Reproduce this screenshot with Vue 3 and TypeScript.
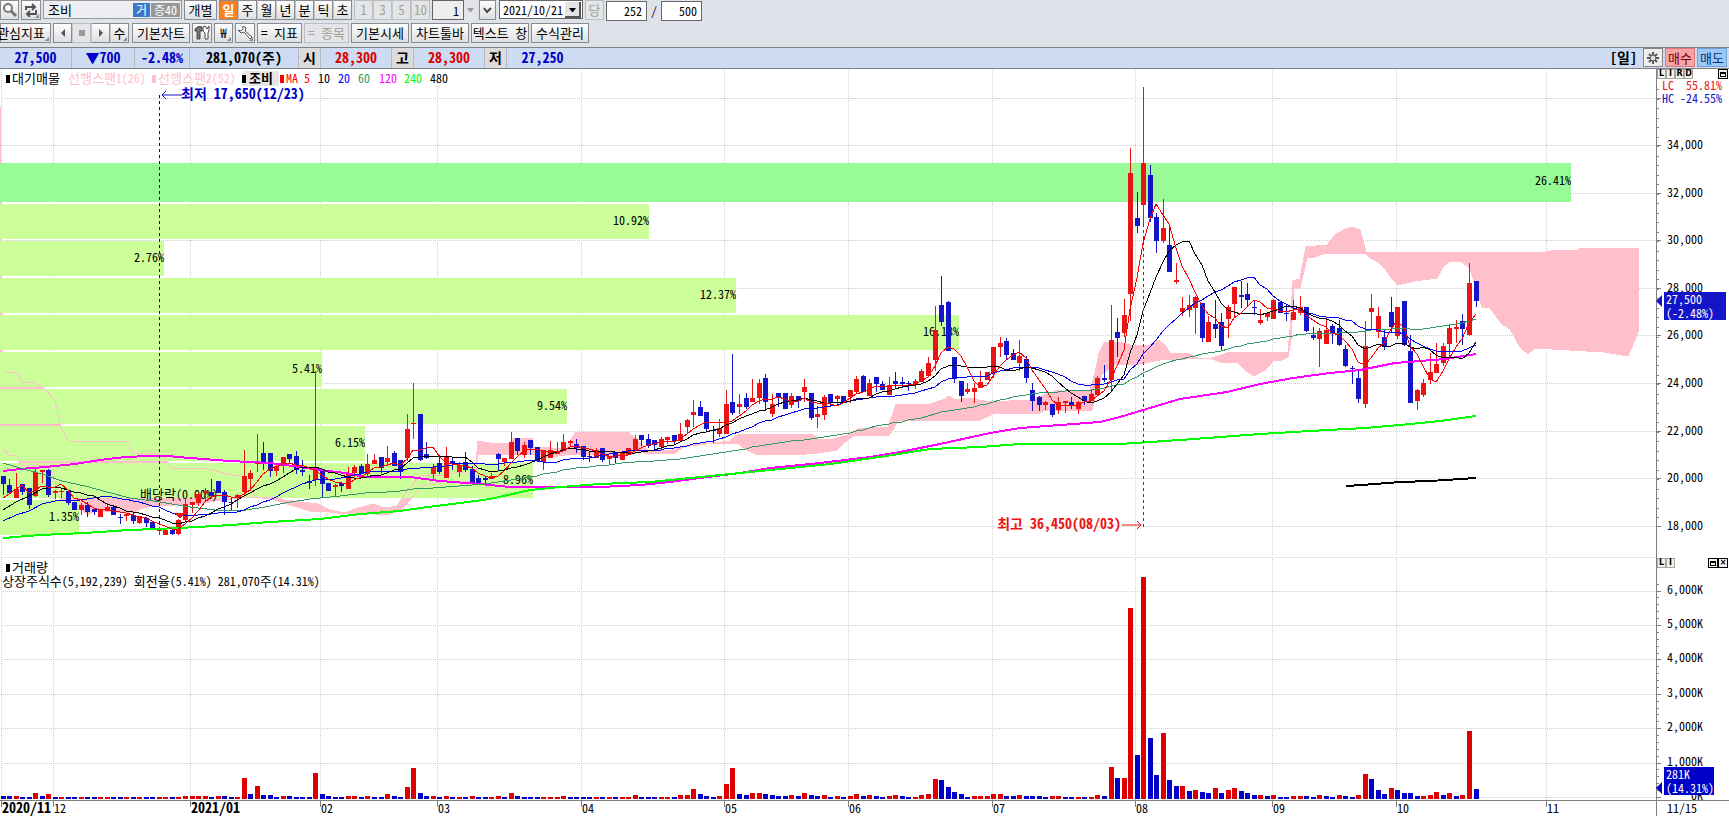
<script setup lang="ts">
import { ref } from 'vue'

type Candle = { x: number; up: boolean; high: number; top: number; bottom: number; low: number; close: number }

// Each entry: direction, high, body top, body bottom, low (chart y units)
const rawCandles = `
b476 476 484 495,b479 485 493 493,r473 489 498 498,b484 484 492 495,b488 488 505 509,r469 472 496 497,r470 470 472 483,b469 470 495 497,r490 491 493 499,r489 491 492 498,
b491 491 503 505,b502 502 510 510,r503 505 510 515,b502 505 512 517,b508 509 512 515,r510 510 517 517,r503 507 511 511,b505 507 515 515,b514 517 518 524,r513 514 516 521,
b513 515 521 524,r516 516 523 524,b517 518 523 527,b522 522 529 529,r527 530 531 535,r530 530 535 535,b530 530 534 535,r519 520 534 535,r498 504 520 522,r502 502 505 513,
r492 494 503 506,r488 491 493 501,b479 492 496 496,b481 481 493 493,b490 492 502 515,b497 502 503 510,r494 495 498 508,r450 476 492 495,r470 473 479 491,r434 463 464 472,
b442 453 464 470,b453 453 471 477,r465 466 471 476,r457 457 466 473,b454 454 459 463,b451 456 470 474,b460 470 472 476,b475 481 483 489,r371 467 480 486,b469 469 484 497,
b483 483 491 491,r484 485 487 496,b482 483 486 492,r467 473 489 489,r465 467 473 477,b464 466 474 474,r454 464 474 476,r454 460 464 464,b457 457 468 473,r446 458 462 466,
b451 453 466 466,b460 460 472 479,r414 429 458 461,r383 423 424 439,b414 414 460 461,b442 454 458 459,r464 467 474 479,b455 463 472 474,r447 457 478 478,b458 461 464 470,
r462 465 472 477,b452 462 470 472,b466 469 483 483,b475 478 483 483,b476 478 480 483,r473 476 479 479,b453 454 459 470,r458 458 462 466,r432 442 459 459,b438 438 451 455,
r442 445 455 458,b440 440 448 455,b447 447 461 461,r450 450 462 470,r441 450 458 458,r442 451 454 454,r434 442 451 451,r440 441 443 447,b439 444 448 453,b446 446 457 460,
b451 456 457 462,r448 450 458 458,b448 448 460 462,r456 456 459 464,b452 452 458 463,r453 453 460 460,r448 448 455 455,r435 439 450 450,b435 435 440 446,b434 439 446 448,
b440 440 445 449,r437 439 447 449,r437 437 440 444,b435 435 441 445,r423 434 441 441,r419 420 427 434,r400 412 415 427,b401 407 416 416,b412 412 429 432,b426 430 431 443,
r419 428 434 437,r390 404 434 434,b354 402 413 415,r394 404 407 414,b393 398 407 409,r379 398 402 402,r379 383 398 404,b374 378 402 411,r394 404 414 417,b393 393 397 407,
b393 393 409 409,r393 396 405 408,b396 396 401 408,r379 387 392 402,b393 393 418 420,r406 414 417 428,r395 397 415 420,b394 394 403 407,r395 396 399 406,b396 396 403 403,
r390 390 397 403,r376 379 392 394,b375 376 392 392,r379 383 396 396,b377 377 384 392,b381 384 390 390,r377 385 395 395,b372 381 384 389,b377 382 384 388,b381 383 384 391,
r379 381 384 389,r369 371 382 382,r357 363 376 376,r306 330 360 371,b276 305 322 326,b301 302 351 351,b357 357 379 383,b381 381 396 402,r383 389 392 394,r383 388 392 403,
r371 382 388 388,r372 372 380 380,r347 347 373 378,r337 343 347 357,b338 341 355 360,b349 353 360 360,r340 356 363 371,b356 359 378 383,b383 390 401 411,b396 397 405 411,
r401 402 405 410,b404 404 415 417,r397 402 410 414,r401 401 403 413,b397 402 405 409,r401 402 409 414,b396 396 401 405,r390 394 401 401,r376 378 395 395,b365 378 380 382,
r305 340 380 392,b318 332 338 357,r299 315 333 337,r148 173 294 321,b192 218 226 233,r87 163 205 224,b165 175 218 222,b213 217 241 253,r199 228 241 243,b228 245 272 272,
r263 280 282 284,r297 308 312 316,r295 305 310 317,r296 297 308 334,b303 303 338 342,r316 322 342 342,b300 324 329 338,b313 322 346 350,r305 307 319 338,r287 287 304 318,
b281 295 297 308,b283 294 300 306,b300 307 308 315,r309 320 323 325,r312 313 317 321,r299 300 319 319,b302 302 313 313,b305 313 314 321,r300 312 320 320,r296 307 313 315,
b307 307 331 332,b327 335 338 340,r328 331 339 367,r318 330 344 344,b324 326 333 344,b320 328 345 346,b345 349 366 367,b366 368 369 384,b371 378 399 403,r321 346 404 408,
r294 308 312 329,r307 316 332 338,b330 337 347 350,b297 312 327 332,r307 307 336 339,b301 301 345 346,b335 351 403 403,r389 390 401 410,r379 383 395 397,r353 372 380 384,
r343 364 373 373,r343 346 363 366,r324 328 344 357,r320 327 329 343,b314 321 329 345,r263 283 335 336,b281 281 301 307`

const xAt = (i: number): number => Math.floor(3 + i * (1473 / 226))

const candles: Candle[] = rawCandles.split(',').map((s, i) => {
  const t = s.trim()
  const up = t[0] === 'r'
  const [high, top, bottom, low] = t.slice(1).split(' ').map(Number)
  return { x: xAt(i), up, high, top, bottom, low, close: up ? top : bottom }
})

const volumes: number[] = (
  '3 3 3 2 2 6 3 5 2 2 2 2 2 2 2 2 2 2 2 2 2 2 2 2 2 2 2 2 3 3 3 3 2 3 3 2 2 21 5 13 4 4 2 3 3 2 2 2 26 5 3 2 2 3 3 2 3 2 2 5 3 2 12 31 6 ' +
  '3 3 2 3 2 2 2 3 2 2 2 3 2 6 3 2 2 2 2 2 2 3 2 2 2 2 2 2 2 2 2 2 4 2 2 2 2 2 2 4 4 10 5 3 2 3 15 31 5 4 6 6 5 4 3 3 4 3 6 4 3 4 2 3 2 ' +
  '3 5 3 4 3 2 3 4 3 2 2 4 5 20 19 12 7 5 2 3 3 3 5 5 3 3 4 3 3 3 2 3 3 2 2 2 2 2 4 3 32 21 21 191 44 222 61 24 66 19 13 13 8 9 7 6 11 6 9 11 8 6 4 4 3 ' +
  '4 2 2 3 3 3 2 4 3 2 4 3 2 4 25 20 9 5 11 9 6 6 3 3 4 7 4 6 3 4 68 10'
).split(' ').map(Number)

const volumeBars = volumes.map((h, i) => {
  const prev = i ? volumes[i - 1] : h
  const up = h === prev ? candles[i]?.up ?? false : h > prev
  return { x: xAt(i) - 2, y: 799 - h, h, up }
})

// Simple moving average of closes, preceded by the part that depends on earlier sessions
function average(n: number, lead: string): string {
  const pts: string[] = [lead]
  for (let i = n - 1; i < candles.length; i++) {
    let sum = 0
    for (let k = i - n + 1; k <= i; k++) sum += candles[k].close
    pts.push(`${xAt(i)},${Math.round(sum / n)}`)
  }
  return pts.join(' ')
}

const thinLines = [
  { color: '#339966', points: average(60, '3,463 20,468 42,474 62,481 85,486 107,492 130,498 160,502 190,507 215,510 240,511 265,507 285,503 310,499 340,496 365,493') },
  { color: '#0000ee', points: average(20, '3,521 16,515 29,511 42,504 55,501 80,500 107,496 122,499') },
  { color: '#000000', points: average(10, '3,510 16,502 29,496 42,489 55,487') },
  { color: '#ff0000', points: average(5, '3,498 9,494 16,489 22,485') },
]
const thickLines = [
  { color: '#ff00ff', points: '3,471 20,469 45,467 75,464 100,460 125,457 150,456 167,456 190,458 230,461 270,463 300,467 320,470 345,473 365,477 410,477 440,481 480,484 510,487 545,487 600,487 640,485 670,482 700,478 740,473 770,468 820,463 870,457 900,452 940,444 990,433 1020,428 1060,425 1100,422 1120,417 1180,399 1227,392 1260,384 1293,378 1330,373 1360,370 1395,363 1420,361 1445,359 1476,354' },
  { color: '#00ff00', points: '3,538 40,535 85,533 130,530 180,528 230,525 270,522 320,519 360,514 400,511 420,508 460,503 490,499 530,490 560,487 600,484 650,482 700,477 740,473 770,470 830,464 880,457 930,449 980,447 1020,444 1060,444 1120,444 1180,440 1260,434 1310,431 1365,428 1400,425 1440,421 1476,416' },
  { color: '#000000', points: '1346,486 1362,485 1400,482 1430,481 1476,478' },
]

const spanUpper =
  '3,372 17,372 22,382 31,382 43,387 55,400 61,427 68,441 127,441 133,453 160,453 172,468 207,469 233,475 241,475 248,488 257,497 275,497 285,500 300,502 318,504 330,510 345,513 355,509 373,504 385,508 397,506 403,497 410,487 420,476 445,475 460,472 470,474 476,462 478,441 490,443 512,443 513,439 532,438 534,447 566,449 570,441 576,432 628,432 640,443 648,450 672,450 682,447 730,441 738,434 812,434 818,439 833,439 848,435 858,429 888,427 893,413 896,404 930,404 945,399 949,396 955,400 970,398 988,402 1030,400 1050,393 1058,390 1068,392 1090,390 1095,373 1099,353 1104,343 1120,342 1130,345 1150,345 1158,340 1165,345 1170,353 1190,354 1198,358 1212,358 1230,352 1288,352 1290,330 1293,281 1300,279 1306,247 1327,245 1335,235 1345,229 1353,227 1360,230 1366,252 1546,252 1554,250 1578,250 1580,248 1639,248'
const spanLower =
  '1639,330 1628,356 1604,352 1535,348 1528,354 1520,347 1510,329 1502,324 1490,308 1482,307 1478,295 1470,268 1460,261 1450,261 1443,267 1437,278 1415,281 1398,285 1392,279 1386,270 1378,262 1370,258 1365,253 1325,253 1315,257 1307,258 1300,288 1294,288 1291,340 1288,357 1280,361 1274,360 1265,370 1254,376 1245,370 1238,363 1220,362 1210,358 1160,360 1140,364 1116,364 1102,374 1095,398 1092,410 1045,410 1040,413 995,413 980,420 898,420 893,430 889,435 855,435 845,442 837,450 818,453 795,455 778,454 757,455 745,449 738,443 700,443 685,446 675,453 648,454 640,452 620,457 610,457 590,454 565,455 545,458 532,454 478,454 476,470 470,481 440,482 430,484 420,487 412,498 400,511 385,515 365,513 345,514 330,512 310,511 290,505 275,500 257,497 240,498 215,501 200,504 150,506 130,513 95,511 88,515 80,508 60,499 50,465 21,465 17,456 9,455 3,448'
const cloud = `0,107 1,107 ${spanUpper} ${spanLower} 0,448`

const profile = [
  { y: 163, h: 39, w: 1571, label: '26.41%', strong: true },
  { y: 204, h: 35, w: 649, label: '10.92%' },
  { y: 241, h: 35, w: 164, label: '2.76%' },
  { y: 278, h: 35, w: 736, label: '12.37%' },
  { y: 315, h: 35, w: 959, label: '16.18%' },
  { y: 352, h: 35, w: 322, label: '5.41%' },
  { y: 389, h: 35, w: 567, label: '9.54%' },
  { y: 426, h: 35, w: 365, label: '6.15%' },
  { y: 463, h: 35, w: 533, label: '8.96%' },
  { y: 500, h: 35, w: 79, label: '1.35%' },
]

const months = [
  { x: 1, label: '2020/11', bold: true },
  { x: 53, label: '12' },
  { x: 190, label: '2021/01', bold: true },
  { x: 320, label: '02' },
  { x: 437, label: '03' },
  { x: 581, label: '04' },
  { x: 724, label: '05' },
  { x: 848, label: '06' },
  { x: 992, label: '07' },
  { x: 1135, label: '08' },
  { x: 1272, label: '09' },
  { x: 1396, label: '10' },
  { x: 1546, label: '11' },
]
const priceY = (k: number): number => Math.floor(98 + (36 - k) * 23.79)
const prices = [36, 34, 32, 30, 28, 26, 24, 22, 20, 18].map(k => ({ y: priceY(k), label: k === 36 ? '' : `${k},000` }))
const priceTicks = Array.from({ length: 46 }, (_, i) => Math.round(89 + i * 9.52))
const volumeLevels = [6, 5, 4, 3, 2, 1, 0].map(k => ({ y: Math.round(797 - k * 34.4), label: k ? `${k},000K` : '0K' }))
const volumeTicks = Array.from({ length: 32 }, (_, i) => Math.round(797 - i * 6.88))

const periods = ['일', '주', '월', '년', '분', '틱', '초']
const active = ref('일')
const date = ref('2021/10/21')
const stock = ref('조비')
const minute = ref('1')
const shown = ref('252')
const total = ref('500')
</script>

<template>
  <main class="window">
    <div class="toolbar">
      <div class="row">
        <button class="btn sq first" aria-label="검색">
          <svg width="16" height="16" viewBox="0 0 16 16"><circle cx="6" cy="6" r="4" fill="#fff" stroke="#777" stroke-width="2" /><path d="M9 9l5 5" stroke="#777" stroke-width="3" /></svg>
        </button>
        <button class="btn sq corner" aria-label="종목 전환">
          <svg width="14" height="14" viewBox="0 0 14 14" fill="none" stroke="#555" stroke-width="2"><path d="M2 7V4h9M8 1l3 3-3 3M12 7v4H3M6 8l-3 3 3 3" /></svg>
        </button>
        <div class="stock">
          <input v-model="stock" aria-label="종목명" />
          <span class="tag blue">거</span><span class="tag">증40</span>
        </div>
        <button class="btn each">개별</button>
        <div class="group">
          <button v-for="p in periods" :key="p" class="btn cell" :class="{ on: active === p }" @click="active = p">{{ p }}</button>
        </div>
        <div class="group">
          <button v-for="n in ['1', '3', '5', '10']" :key="n" class="btn cell off" disabled>{{ n }}</button>
        </div>
        <div class="minute">
          <input v-model="minute" class="field" aria-label="분 단위" /><button class="btn drop off" aria-label="분 선택"><svg width="7" height="4"><path d="M0 0h7L4 4H3z" fill="#999" /></svg></button>
        </div>
        <button class="btn chev" aria-label="더보기"><svg width="9" height="8" fill="none" stroke="#444" stroke-width="2"><path d="M1 2l3 4 4-4" /></svg></button>
        <div class="date">
          <select v-model="date" aria-label="조회일"><option>2021/10/21</option></select>
          <svg class="datearrow" width="16" height="16"><path d="M0 0h16v16H0z" fill="#e4e4e4" /><path d="M15 0v15H0" fill="none" stroke="#555" stroke-width="2" /><path d="M4 6h7L8 10H7z" fill="#000" /></svg>
        </div>
        <button class="btn cell off" disabled>당</button>
        <div class="counts">
          <input v-model="shown" class="field" aria-label="조회 봉수" /><span>/</span><input v-model="total" class="field" aria-label="전체 봉수" />
        </div>
      </div>
      <div class="row two">
        <button class="btn clip corner">관심지표</button>
        <div class="group nav">
          <button class="btn cell" aria-label="이전"><svg width="6" height="8"><path d="M5 0v8L1 4z" fill="#555" /></svg></button>
          <button class="btn cell off" aria-label="정지"><svg width="6" height="6"><path d="M0 0h6v6H0z" fill="#999" /></svg></button>
          <button class="btn cell" aria-label="다음"><svg width="6" height="8"><path d="M1 0v8l4-4z" fill="#555" /></svg></button>
          <button class="btn cell corner">수</button>
        </div>
        <button class="btn wide">기본차트</button>
        <button class="btn sq" aria-label="도구">
          <svg width="16" height="16" viewBox="0 0 16 16" stroke="#444"><path d="M1 4q3-4 7-2v4H6v8H3V6H1z" fill="#777" /><path d="M9 2v4l2 2v6h3V8l1-3V1l-2 3-2-3z" fill="#fff" /></svg>
        </button>
        <button class="btn sq corner first">₩</button>
        <button class="btn sq corner" aria-label="설정">
          <svg width="16" height="16" viewBox="0 0 16 16"><path d="M1 5l3 3 3-1 6 7 2-2-7-6 1-3-3-2v3L4 6z" fill="#fff" stroke="#555" /></svg>
        </button>
        <button class="btn mid">= 지표</button>
        <button class="btn mid off" disabled>= 종목</button>
        <button class="btn wide">기본시세</button>
        <button class="btn wide">차트툴바</button>
        <button class="btn wide">텍스트 창</button>
        <button class="btn wide">수식관리</button>
      </div>
    </div>

    <div class="quote">
      <span class="q blue c1">27,500</span>
      <span class="q blue c2">▼700</span>
      <span class="q blue c3">-2.48%</span>
      <span class="q c4">281,070(주)</span>
      <span class="q head">시</span><span class="q red c5">28,300</span>
      <span class="q head">고</span><span class="q red c5">28,300</span>
      <span class="q head">저</span><span class="q blue c5 last">27,250</span>
      <span class="fill">[일]</span>
      <button class="gear" aria-label="설정">
        <svg width="12" height="12" viewBox="0 0 12 12" stroke="#555"><path d="M6 0v12M0 6h12M2 2l8 8M10 2l-8 8" stroke-width="2" /><circle cx="6" cy="6" r="3" fill="#ddd" /></svg>
      </button>
      <button class="order buy">매수</button>
      <button class="order sell">매도</button>
    </div>

    <section class="panel" aria-label="가격 차트">
      <svg class="plot" viewBox="0 69 1729 488">
        <g class="grid">
          <line v-for="m in months" :key="m.x" :x1="m.x" :x2="m.x" y1="70" y2="555" />
          <line v-for="p in prices" :key="p.y" x1="1" x2="1656" :y1="p.y" :y2="p.y" />
        </g>
        <polygon :points="cloud" class="cloud" />
        <rect v-for="b in profile" :key="b.y" x="0" :y="b.y" :width="b.w" :height="b.h" :fill="b.strong ? '#98fb98' : '#ccff99'" />
        <polyline :points="spanUpper" class="cloudline" />
        <polyline :points="spanLower" class="cloudline" />
        <text v-for="b in profile" :key="b.label" :x="b.w" :y="b.y + (b.strong ? 22 : 21)" text-anchor="end">{{ b.label }}</text>
        <text x="140" y="499"><tspan class="ko">배당락</tspan>(0.00%)</text>

        <g>
          <rect x="6" y="75" width="4" height="8" /><text x="12" y="83" class="ko">대기매물</text>
          <text x="68" y="83" fill="#ffc0cb"><tspan class="ko">선행스팬</tspan>1(26)</text>
          <rect x="152" y="75" width="4" height="8" fill="#ffc0cb" /><text x="158" y="83" fill="#ffc0cb"><tspan class="ko">선행스팬</tspan>2(52)</text>
          <rect x="242" y="71" width="37" height="15" fill="#e6e6e6" /><rect x="242" y="75" width="4" height="8" /><text x="249" y="83" class="ko strong">조비</text>
          <rect x="280" y="75" width="4" height="8" fill="#f00" /><text x="286" y="83" fill="#f00">MA</text>
          <text x="304" y="83" fill="#f00">5</text>
          <text x="318" y="83">10</text>
          <text x="338" y="83" fill="#00f">20</text>
          <text x="358" y="83" fill="#396">60</text>
          <text x="379" y="83" fill="#f0f">120</text>
          <text x="404" y="83" fill="#0f0">240</text>
          <text x="430" y="83">480</text>
        </g>

        <g class="crisp">
          <g v-for="c in candles" :key="c.x" :fill="c.up ? '#eb1414' : '#1414c8'">
            <rect :x="c.x" :y="c.high" width="1" :height="c.low - c.high" />
            <rect :x="c.x - 2" :y="c.top" width="5" :height="c.bottom - c.top" />
          </g>
          <polyline v-for="l in thickLines" :key="l.points" :points="l.points" :stroke="l.color" stroke-width="2" fill="none" />
          <polyline v-for="l in thinLines" :key="l.color" :points="l.points" :stroke="l.color" fill="none" />
          <path d="M174 513h11l-5 5h-1z" fill="#eb1414" />
          <path d="M159 95V527" class="lowmark" />
          <path d="M1143 224V527" class="highmark" />
        </g>
        <path d="M182 95H162M166 91l-4 4 4 4" fill="none" stroke="#1414c8" />
        <text x="181" y="99" class="bold" fill="#0000c8">최저 17,650(12/23)</text>
        <path d="M1122 525H1141M1137 521l4 4-4 4" fill="none" stroke="#eb1414" />
        <text x="1121" y="529" class="bold" fill="#eb1414" text-anchor="end">최고 36,450(08/03)</text>

        <g class="axis">
          <rect x="1656" y="69" width="1" height="488" />
          <rect v-for="t in priceTicks" :key="t" x="1656" :y="t" width="3" height="1" />
          <rect v-for="p in prices" :key="p.y" x="1656" :y="p.y" width="5" height="1" />
        </g>
        <text v-for="p in prices" :key="p.y" x="1667" :y="p.y + 4">{{ p.label }}</text>
        <text x="1662" y="90" fill="#eb1414">LC</text><text x="1722" y="90" fill="#eb1414" text-anchor="end">55.81%</text>
        <text x="1662" y="103" fill="#1414c8">HC</text><text x="1722" y="103" fill="#1414c8" text-anchor="end">-24.55%</text>
        <rect x="1664" y="292" width="62" height="28" fill="#1414c8" />
        <path d="M1656 301l6-6v12z" fill="#1414c8" />
        <text x="1666" y="304" fill="#fff">27,500</text><text x="1666" y="318" fill="#fff">(-2.48%)</text>
      </svg>
      <div class="tools left">
        <button>L</button><button>I</button><button>R</button><button>D</button>
      </div>
      <div class="tools right"><button class="box" aria-label="최대화"><i></i></button></div>
    </section>

    <section class="panel volume" aria-label="거래량 차트">
      <svg class="plot" viewBox="0 557 1729 243">
        <g class="grid">
          <line v-for="m in months" :key="m.x" :x1="m.x" :x2="m.x" y1="559" y2="800" />
          <line v-for="v in volumeLevels" :key="v.y" x1="1" x2="1656" :y1="v.y" :y2="v.y" />
        </g>
        <rect x="0" y="557" width="1656" height="1" fill="#e6e6e6" />
        <rect x="6" y="564" width="4" height="8" /><text x="12" y="572" class="ko">거래량</text>
        <text x="2" y="586"><tspan class="ko">상장주식수</tspan>(5,192,239) <tspan class="ko">회전율</tspan>(5.41%) 281,070<tspan class="ko">주</tspan>(14.31%)</text>
        <g class="crisp">
          <rect v-for="b in volumeBars" :key="b.x" :x="b.x" :y="b.y" width="5" :height="b.h" :fill="b.up ? '#dc0000' : '#0000c8'" />
        </g>
        <g class="axis">
          <rect x="1656" y="557" width="1" height="243" />
          <rect v-for="t in volumeTicks" :key="t" x="1656" :y="t" width="3" height="1" />
          <rect v-for="v in volumeLevels" :key="v.y" x="1656" :y="v.y" width="5" height="1" />
        </g>
        <text v-for="v in volumeLevels" :key="v.y" x="1703" :y="v.y + 3" text-anchor="end">{{ v.label }}</text>
        <rect x="1664" y="767" width="50" height="28" fill="#0000c8" />
        <path d="M1656 788l6-6v12z" fill="#0000c8" />
        <text x="1666" y="779" fill="#fff">281K</text><text x="1666" y="793" fill="#fff">(14.31%)</text>
      </svg>
      <div class="tools left"><button>L</button><button>I</button></div>
      <div class="tools right"><button class="box" aria-label="최대화"><i></i></button><button class="box" aria-label="닫기">×</button></div>
    </section>

    <svg class="plot dates" viewBox="0 800 1729 16" role="img" aria-label="날짜 축">
      <g class="axis">
        <rect x="0" y="800" width="1729" height="1" />
        <rect v-for="m in months" :key="m.x" :x="m.x" y="800" width="1" height="7" />
        <rect x="1656" y="800" width="1" height="16" />
      </g>
      <text v-for="m in months" :key="m.x" :x="m.x + 1" y="813" :class="{ bold: m.bold }">{{ m.label }}</text>
      <text x="1667" y="813">11/15</text>
    </svg>
  </main>
</template>

<style>
body {
  background: #fff;
  overflow-x: hidden;
}
</style>

<style scoped>
.window {
  font: 12px/14px 'Noto Sans CJK KR', sans-serif;
  font-feature-settings: 'hwid';
  color: #000;
  background: #fff;
}
* {
  box-sizing: border-box;
}
button,
input,
select {
  font-family: inherit;
  font-size: inherit;
  font-weight: inherit;
  line-height: inherit;
  font-feature-settings: inherit;
  margin: 0;
  padding: 0;
  border-radius: 0;
  color: #000;
}
.toolbar {
  background: #dfe2e8;
  height: 47px;
}
.row {
  display: flex;
  gap: 2px;
  height: 21px;
  white-space: nowrap;
}
.row.two {
  margin-top: 2px;
}
.btn {
  position: relative;
  display: flex;
  flex: none;
  align-items: center;
  justify-content: center;
  height: 20px;
  border: 1px solid #888b90;
  background: linear-gradient(#fdfdfd, #dedfe1);
  font-size: 13px;
}
.sq {
  width: 20px;
}
.first {
  width: 19px;
}
.corner::after {
  content: '';
  position: absolute;
  right: 1px;
  bottom: 1px;
  border: 2px solid #888;
  border-top-color: transparent;
  border-left-color: transparent;
}
.each {
  width: 33px;
}
.group {
  display: flex;
}
.cell {
  width: 19px;
}
.cell + .cell {
  border-left-color: #c4c6ca;
}
.on {
  background: #f58220;
  color: #fff;
  font-weight: bold;
}
.off {
  color: #a5a28f;
  background: #e4e5e8;
  border-color: #bcbec2;
}
.stock {
  display: flex;
  align-items: center;
  width: 139px;
  height: 19px;
  border: 1px solid #999;
  background: #eceef1;
  padding-right: 1px;
}
.stock input {
  flex: 1;
  min-width: 0;
  border: 0;
  background: none;
  padding-left: 4px;
  font-size: 13px;
}
.tag {
  background: #999;
  color: #fff;
  height: 14px;
  line-height: 14px;
  padding: 0 3px;
}
.tag.blue {
  background: #3c78c8;
  margin-right: 1px;
}
.field {
  width: 41px;
  height: 20px;
  border: 1px solid #666;
  background: #fff;
  text-align: right;
  padding-right: 4px;
}
.minute {
  display: flex;
}
.minute .field {
  width: 32px;
  background: #eee;
}
.drop {
  width: 12px;
  border: 0;
}
.chev {
  width: 17px;
  margin: 0 1px;
}
.date {
  position: relative;
  width: 84px;
}
.date select {
  appearance: none;
  width: 100%;
  height: 19px;
  border: 1px solid #666;
  background: #fff;
  padding-left: 3px;
}
.datearrow {
  position: absolute;
  right: 2px;
  top: 2px;
  pointer-events: none;
}
.counts {
  display: flex;
  gap: 4px;
  align-items: center;
}
.clip {
  width: 51px;
  justify-content: flex-end;
  padding-right: 5px;
}
.nav {
  margin-right: 1px;
}
.wide {
  width: 58px;
}
.mid {
  width: 45px;
}
.quote {
  display: flex;
  height: 22px;
  border-top: 1px solid #808080;
  border-bottom: 1px solid #808080;
  background: #cddcf2;
  font-size: 14px;
  font-weight: bold;
  line-height: 18px;
}
.q {
  text-align: center;
  border-right: 1px solid #b4b8c0;
}
.blue {
  color: #0000c8;
}
.tag.blue {
  color: #fff;
}
.red {
  color: #dc0000;
}
.head {
  width: 22px;
  background: #dcdcdc;
}
.c1 {
  width: 72px;
}
.c2 {
  width: 63px;
}
.c3 {
  width: 55px;
}
.c4 {
  width: 109px;
}
.c5 {
  width: 71px;
}
.last {
  border-right: 0;
}
.fill {
  margin-left: auto;
  margin-right: 6px;
}
.gear,
.order {
  height: 19px;
  border: 1px solid #888;
  background: #eee;
  margin-right: 2px;
}
.gear {
  width: 20px;
  display: grid;
  place-items: center;
}
.order {
  width: 30px;
  font-size: 13px;
  font-weight: normal;
  line-height: 16px;
}
.buy {
  background: #f5a5a5;
  border-color: #e07878;
  color: #780000;
}
.sell {
  background: #a0c8f5;
  border-color: #6ea0dc;
  color: #003278;
}
.panel {
  position: relative;
}
.plot {
  display: block;
  width: 100%;
  height: auto;
}
.ko {
  font-size: 13px;
}
.strong {
  font-weight: bold;
}
.bold {
  font-size: 14px;
  font-weight: bold;
}
.grid line {
  stroke: #cfcfcf;
  stroke-dasharray: 1 1;
  shape-rendering: crispEdges;
}
.crisp,
.cloud,
.cloudline,
.axis {
  shape-rendering: crispEdges;
}
.cloud {
  fill: #ffc0cb;
}
.cloudline {
  fill: none;
  stroke: #ffc0cb;
}
.axis {
  fill: #808080;
}
.lowmark {
  stroke: #0000c8;
  stroke-dasharray: 3 3;
}
.highmark {
  stroke: #dc0000;
  stroke-dasharray: 3 3;
}
.tools {
  position: absolute;
  top: 0;
  display: flex;
}
.tools.left {
  right: 36px;
}
.volume .tools.left {
  right: 54px;
}
.tools.right {
  right: 1px;
}
.volume .tools {
  top: 1px;
}
.tools button {
  width: 9px;
  height: 10px;
  border: 1px solid #aca899;
  background: #f2f2ee;
  font-family: 'DejaVu Sans', sans-serif;
  font-size: 8px;
  font-weight: bold;
  line-height: 8px;
}
.tools .box {
  display: grid;
  place-items: center;
  width: 10px;
  border-color: #000;
}
.box i {
  width: 6px;
  height: 5px;
  border: 1px solid #000;
  border-top-width: 2px;
}
</style>
